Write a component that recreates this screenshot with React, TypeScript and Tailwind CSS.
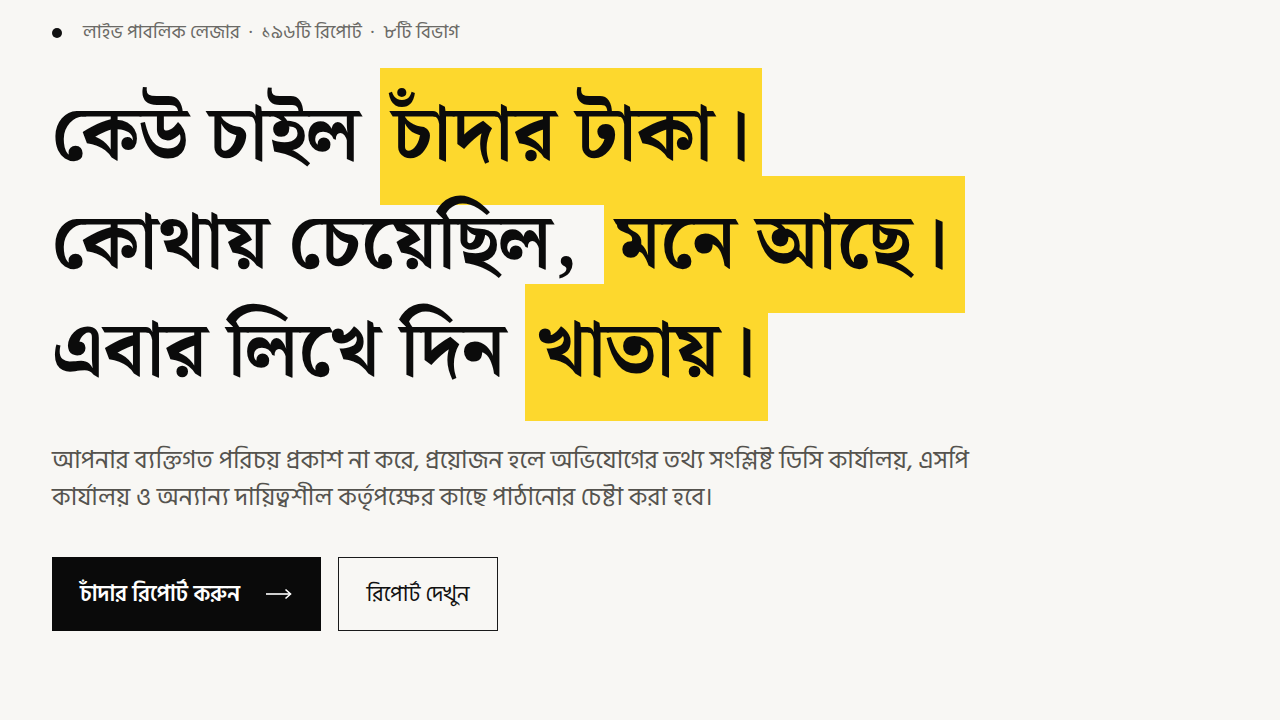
import React from 'react';

const serif = 'font-["Noto_Serif_Bengali","Noto_Sans_Bengali",serif]';

const Mark: React.FC<{ children: React.ReactNode; className?: string }> = ({ children, className = '' }) => (
  <span className={`bg-[#fdd82d] pl-[12px] py-[7px] [box-decoration-break:clone] ${className}`}>{children}</span>
);

export default function App() {
  return (
    <div className="min-h-screen bg-[#f8f7f4] text-[#0b0b0b] font-['Hind_Siliguri','Noto_Sans_Bengali',sans-serif]">
      <section className="px-[52px] pt-[21px]">
        {/* meta line */}
        <div className="flex items-center gap-[21px] text-[19px] leading-[24px] text-[#6b6a66]">
          <span className="w-[10px] h-[10px] rounded-full bg-[#111]" />
          <span>লাইভ পাবলিক লেজার &nbsp;·&nbsp; ১৯৬টি রিপোর্ট &nbsp;·&nbsp; ৮টি বিভাগ</span>
        </div>

        {/* headline */}
        <h1 className={`mt-[38px] ${serif} font-bold text-[77px] leading-[108px]`}>
          কেউ চাইল <Mark className="pr-[12px]">চাঁদার টাকা।</Mark>
          <br />
          কোথায় চেয়েছিল, <Mark className="ml-[6px] pr-[17px]">মনে আছে।</Mark>
          <br />
          এবার লিখে দিন <Mark className="pr-[12px]">খাতায়।</Mark>
        </h1>

        {/* body */}
        <p className="mt-[35px] max-w-[940px] text-[25px] leading-[37px] text-[#55534e]">
          আপনার ব্যক্তিগত পরিচয় প্রকাশ না করে, প্রয়োজন হলে অভিযোগের তথ্য সংশ্লিষ্ট ডিসি কার্যালয়, এসপি
          কার্যালয় ও অন্যান্য দায়িত্বশীল কর্তৃপক্ষের কাছে পাঠানোর চেষ্টা করা হবে।
        </p>

        {/* actions */}
        <div className="mt-[41px] flex items-center gap-[17px]">
          <button className="h-[74px] w-[269px] bg-[#0a0a0a] text-white flex items-center justify-between pl-[28px] pr-[29px] text-[22px] font-semibold">
            <span>চাঁদার রিপোর্ট করুন</span>
            <svg width="26" height="12" viewBox="0 0 26 12" fill="none" stroke="currentColor" strokeWidth="1.6">
              <path d="M0 6h24.5" />
              <path d="M19.5 1.5L24.5 6l-5 4.5" />
            </svg>
          </button>
          <button className="h-[74px] w-[160px] border border-[#1a1a1a] text-[22px] text-[#111] flex items-center justify-center">
            রিপোর্ট দেখুন
          </button>
        </div>
      </section>
    </div>
  );
}
